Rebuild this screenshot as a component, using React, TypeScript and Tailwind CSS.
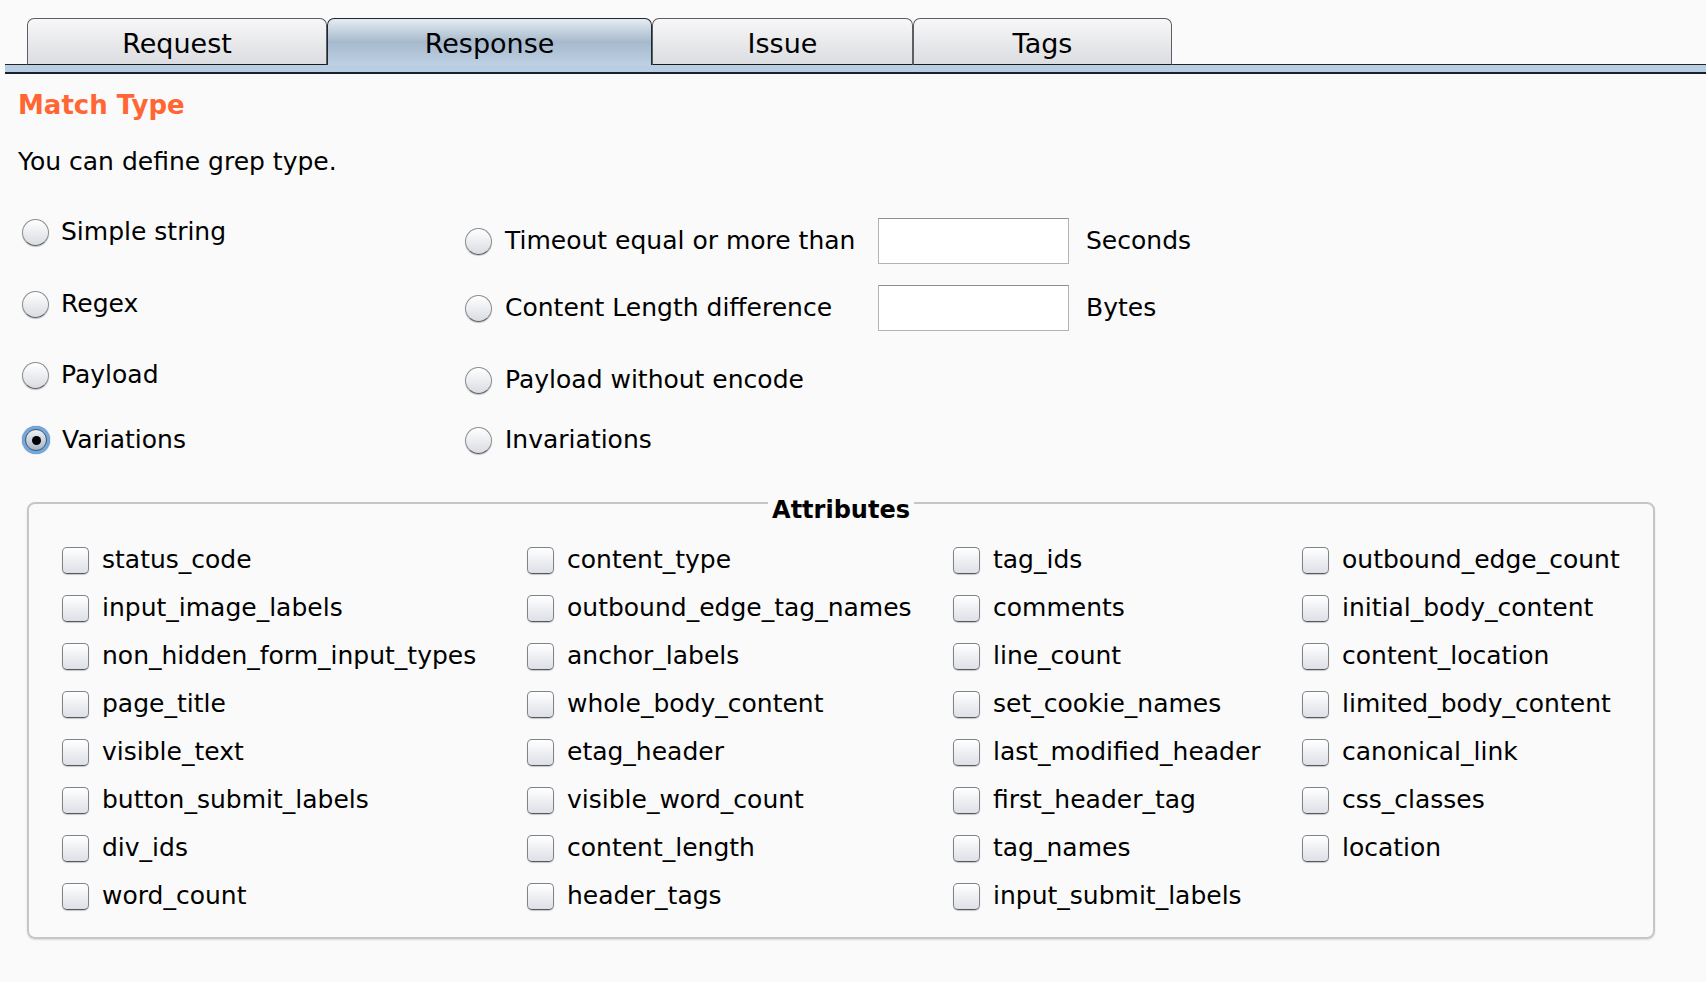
import React from "react";

const tabs = [
  { label: "Request", w: "w-[300px]", active: false },
  { label: "Response", w: "w-[325px]", active: true },
  { label: "Issue", w: "w-[261px]", active: false },
  { label: "Tags", w: "w-[259px]", active: false },
];

const rows: string[][] = [
  ["status_code", "content_type", "tag_ids", "outbound_edge_count"],
  ["input_image_labels", "outbound_edge_tag_names", "comments", "initial_body_content"],
  ["non_hidden_form_input_types", "anchor_labels", "line_count", "content_location"],
  ["page_title", "whole_body_content", "set_cookie_names", "limited_body_content"],
  ["visible_text", "etag_header", "last_modified_header", "canonical_link"],
  ["button_submit_labels", "visible_word_count", "first_header_tag", "css_classes"],
  ["div_ids", "content_length", "tag_names", "location"],
  ["word_count", "header_tags", "input_submit_labels", ""],
];

function Radio({ checked }: { checked?: boolean }) {
  if (checked) {
    return (
      <span className="flex h-[28px] w-[28px] shrink-0 items-center justify-center rounded-full bg-[#73a7da] shadow-[0_0_1px_#3b6ea3]">
        <span className="flex h-[22px] w-[22px] items-center justify-center rounded-full border border-[#44546a] bg-linear-to-b from-[#eef1f5] to-[#a8b6c8]">
          <span className="h-[9px] w-[9px] rounded-full bg-black" />
        </span>
      </span>
    );
  }
  return (
    <span className="h-[27px] w-[27px] shrink-0 rounded-full border border-[#8b8d92] border-b-[#5e6064] bg-linear-to-b from-white to-[#d9dce2] shadow-[0_1px_1px_rgba(0,0,0,0.22)]" />
  );
}

function Checkbox() {
  return (
    <span className="h-[27px] w-[27px] shrink-0 rounded-[5px] border border-[#808287] border-b-[#55575c] bg-linear-to-b from-white to-[#dde0e7] shadow-[0_1px_1px_rgba(0,0,0,0.2)]" />
  );
}

function Tab({ label, w, active }: { label: string; w: string; active: boolean }) {
  if (active) {
    return (
      <div
        className={`${w} -mb-px flex h-[47px] items-center justify-center rounded-t-[7px] border border-b-0 border-[#1d2836] bg-linear-to-b from-[#e6ecf2] via-[#a7bacd] to-[#bdd0e4] pt-[5px] text-[27px] text-black`}
      >
        {label}
      </div>
    );
  }
  return (
    <div
      className={`${w} -mb-px flex h-[47px] items-center justify-center rounded-t-[7px] border border-[#5b5e63] border-b-[#1a1a1a] bg-linear-to-b from-[#f7f7f8] to-[#dcdde1] pt-[5px] text-[27px] text-black`}
    >
      {label}
    </div>
  );
}

export default function App() {
  return (
    <div className="h-[982px] w-[1706px] overflow-hidden bg-[#fafafa] font-['DejaVu_Sans',sans-serif] text-black">
      {/* Tab header */}
      <div className="pl-[5px] pt-[18px]">
        <div className="flex h-[47px] items-start border-b border-[#262626] pl-[22px]">
          {tabs.map((t) => (
            <Tab key={t.label} {...t} />
          ))}
        </div>
        <div className="h-[7px] bg-[#b9cee3]" />
        <div className="h-[2px] bg-[#17212d]" />
      </div>

      <div className="px-[18px]">
        <div className="mt-[16px] h-[30px] text-[26px] font-bold leading-[30px] text-[#ff6633]">
          Match Type
        </div>
        <div className="mt-[27px] h-[30px] text-[25px] leading-[30px]">You can define grep type.</div>

        {/* Radio section */}
        <div className="mt-[40px] flex items-start text-[25px] leading-[30px]">
          <div className="ml-[4px] flex w-[443px] flex-col">
            <div className="flex h-[30px] items-center gap-[12px]">
              <Radio />
              <span>Simple string</span>
            </div>
            <div className="mt-[42px] flex h-[30px] items-center gap-[12px]">
              <Radio />
              <span>Regex</span>
            </div>
            <div className="mt-[41px] flex h-[30px] items-center gap-[12px]">
              <Radio />
              <span>Payload</span>
            </div>
            <div className="mt-[35px] flex h-[30px] items-center gap-[12px]">
              <Radio checked />
              <span>Variations</span>
            </div>
          </div>

          <div className="flex flex-col pt-[1px]">
            <div className="flex h-[46px] items-center">
              <Radio />
              <span className="ml-[13px] w-[373px]">Timeout equal or more than</span>
              <span className="h-[46px] w-[191px] border border-[#b3b3b3] border-t-[#8e8e8e] bg-white" />
              <span className="ml-[17px]">Seconds</span>
            </div>
            <div className="mt-[21px] flex h-[46px] items-center">
              <Radio />
              <span className="ml-[13px] w-[373px]">Content Length difference</span>
              <span className="h-[46px] w-[191px] border border-[#b3b3b3] border-t-[#8e8e8e] bg-white" />
              <span className="ml-[17px]">Bytes</span>
            </div>
            <div className="mt-[34px] flex h-[30px] items-center">
              <Radio />
              <span className="ml-[13px]">Payload without encode</span>
            </div>
            <div className="mt-[30px] flex h-[30px] items-center">
              <Radio />
              <span className="ml-[13px]">Invariations</span>
            </div>
          </div>
        </div>

        {/* Attributes fieldset */}
        <div className="relative ml-[9px] mt-[47px] h-[437px] w-[1628px] rounded-[8px] border-2 border-[#c6c6c6] shadow-[0_1px_2px_rgba(0,0,0,0.12)] pl-[33px] pt-[32px]">
          <span className="absolute left-1/2 top-[-9px] -translate-x-1/2 bg-[#fafafa] px-[4px] text-[24px] font-bold leading-[30px]">
            Attributes
          </span>
          <div className="grid grid-cols-[465px_426px_349px_auto] text-[25px] leading-[30px]">
            {rows.map((r, ri) =>
              r.map((name, ci) => (
                <div key={`${ri}-${ci}`} className="flex h-[48px] items-center gap-[13px]">
                  {name ? (
                    <>
                      <Checkbox />
                      <span>{name}</span>
                    </>
                  ) : null}
                </div>
              ))
            )}
          </div>
        </div>
      </div>
    </div>
  );
}
